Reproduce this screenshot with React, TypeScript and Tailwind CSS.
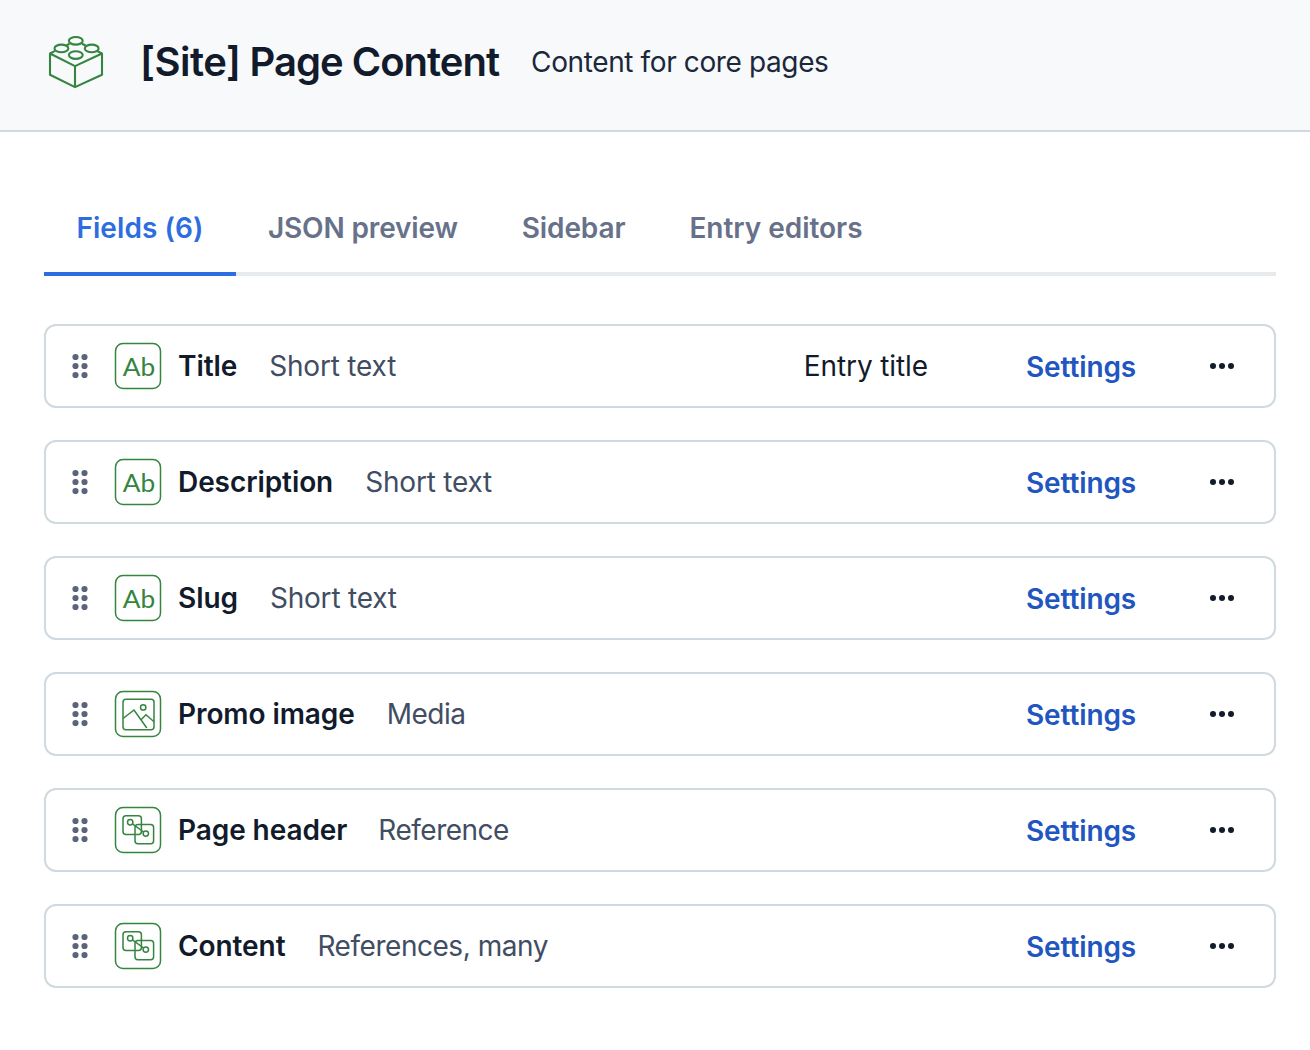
import React from "react";

type Kind = "text" | "media" | "reference";
type Field = { name: string; type: string; kind: Kind; typeTracking: string; entryTitle?: boolean };

const fields: Field[] = [
  { name: "Title", type: "Short text", kind: "text", typeTracking: "tracking-[-0.2px]", entryTitle: true },
  { name: "Description", type: "Short text", kind: "text", typeTracking: "tracking-[-0.2px]" },
  { name: "Slug", type: "Short text", kind: "text", typeTracking: "tracking-[-0.2px]" },
  { name: "Promo image", type: "Media", kind: "media", typeTracking: "tracking-[-0.5px]" },
  { name: "Page header", type: "Reference", kind: "reference", typeTracking: "-ml-px tracking-[-0.5px]" },
  { name: "Content", type: "References, many", kind: "reference", typeTracking: "tracking-[-0.46px]" },
];

const tabs = [
  { label: "Fields (6)", className: "w-48 border-[#2e6ddf] text-[#2e6ddf] tracking-[0.08px]" },
  { label: "JSON preview", className: "border-transparent text-[#67728a] tracking-[-0.16px]" },
  { label: "Sidebar", className: "border-transparent text-[#67728a] tracking-[-0.12px]" },
  { label: "Entry editors", className: "border-transparent text-[#67728a] tracking-[-0.04px]" },
];

function BrickIcon() {
  return (
    <svg width="56" height="56" viewBox="48 34 56 56" fill="none" stroke="#35843f" strokeWidth="2.1" strokeLinejoin="round" className="shrink-0">
      <path d="M55.2 50.9 50 53.5v21.2l25 12.4 27-12.4V53.5l-5.2-2.6M50 53.5l25 12.6 27-12.6M75 66.1v21M66.5 45.5l3-1.8M82 43.7l3.6 1.8" />
      <ellipse cx="75.8" cy="40.8" rx="6.9" ry="3.8" />
      <ellipse cx="61.4" cy="48.4" rx="6.9" ry="3.8" />
      <ellipse cx="91.7" cy="48.4" rx="6.9" ry="3.8" />
      <ellipse cx="75.8" cy="55.1" rx="6.9" ry="3.8" />
    </svg>
  );
}

function FieldIcon({ kind }: { kind: Kind }) {
  return (
    <svg width="48" height="48" viewBox="0 0 48 48" fill="none" stroke="#35843f" strokeWidth="1.5" className="shrink-0">
      <rect x="1.5" y="1.5" width="45" height="45" rx="7.5" />
      {kind === "text" && (
        <text
          x="8.8"
          y="33.6"
          fontSize="25"
          textLength="32.4"
          lengthAdjust="spacingAndGlyphs"
          fill="#35843f"
          stroke="none"
          className="font-['Lato',sans-serif]"
        >
          Ab
        </text>
      )}
      {kind === "media" && (
        <>
          <rect x="9" y="9.3" width="31" height="30.4" rx="3" />
          <circle cx="29.2" cy="17.4" r="2.7" />
          <path d="m9 28.5 11-8.5 12.8 18M27 29.8l5-5 8 7" />
        </>
      )}
      {kind === "reference" && (
        <>
          <rect x="9" y="9.7" width="18.4" height="18.9" rx="3" />
          <rect x="21" y="18.6" width="18.6" height="19.2" rx="3" />
          <circle cx="16.2" cy="16.3" r="2.7" />
          <circle cx="31.8" cy="27.6" r="2.7" />
          <path d="m18.4 17.9 11.2 8.1" />
        </>
      )}
    </svg>
  );
}

function DragHandle() {
  return (
    <svg width="16" height="26" viewBox="0 0 16 26" fill="#5a657c" className="shrink-0">
      {[4, 13, 22].map((y) => (
        <React.Fragment key={y}>
          <circle cx="3.5" cy={y} r="3.1" />
          <circle cx="12.5" cy={y} r="3.1" />
        </React.Fragment>
      ))}
    </svg>
  );
}

function FieldRow({ field }: { field: Field }) {
  return (
    <div className="flex h-[84px] items-center rounded-xl border-2 border-[#cfd9e0] pl-[26px] text-[28px] leading-10">
      <DragHandle />
      <div className="ml-[26px] flex items-center">
        <FieldIcon kind={field.kind} />
      </div>
      <span className="mr-8 ml-4 font-semibold tracking-[-0.08px] text-[#111b2b]">{field.name}</span>
      <span className={`text-[#414d63] ${field.typeTracking}`}>{field.type}</span>
      <div className="ml-auto flex items-center">
        {field.entryTitle && <span className="mr-[98px] tracking-[-0.1px] text-[#111b2b]">Entry title</span>}
        <button className="mt-0.5 w-[110px] text-left font-semibold tracking-[-0.12px] text-[#2155bf]">Settings</button>
        <button aria-label="Actions" className="mr-[38px] ml-[72px]">
          <svg width="28" height="8" viewBox="0 0 28 8" fill="#111b2b">
            <circle cx="5" cy="4" r="3" />
            <circle cx="14" cy="4" r="3" />
            <circle cx="23" cy="4" r="3" />
          </svg>
        </button>
      </div>
    </div>
  );
}

export default function App() {
  return (
    <div className="h-[1050px] w-[1310px] overflow-hidden bg-white font-['Inter',sans-serif]">
      <header className="flex h-[132px] items-center border-b-2 border-[#cfd9e0] bg-[#f7f9fa] pb-1.5 pl-12">
        <BrickIcon />
        <h1 className="ml-9 text-[40px] leading-[48px] font-semibold tracking-[-1px] text-[#111b2b]">
          <span className="tracking-[-0.45px]">[Site]</span> Page Content
        </h1>
        <p className="ml-8 text-[28px] leading-10 tracking-[-0.38px] text-[#1b273a]">Content for core pages</p>
      </header>
      <main className="pr-[34px] pl-11">
        <nav className="mt-12 flex h-24 border-b-4 border-[#e7ebee]">
          {tabs.map((tab) => (
            <button key={tab.label} className={`-mb-1 h-24 border-b-4 px-8 pt-1 text-[28px] font-semibold whitespace-nowrap ${tab.className}`}>
              {tab.label}
            </button>
          ))}
        </nav>
        <section className="mt-12 flex flex-col gap-8">
          {fields.map((field) => (
            <FieldRow key={field.name} field={field} />
          ))}
        </section>
      </main>
    </div>
  );
}
